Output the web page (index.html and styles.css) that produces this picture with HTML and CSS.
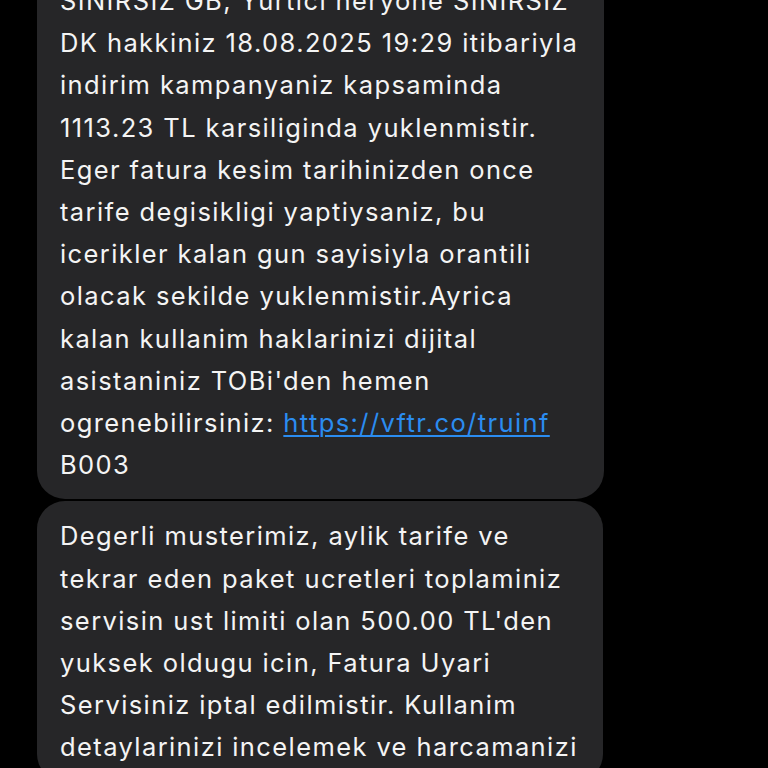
FILE: index.html
```html
<!DOCTYPE html>
<html>

<head>
    <link rel="stylesheet" href="styles.css">
</head>

<body>
    <div class="thread">
        <div class="bubble bubble-first">
            SINIRSIZ GB, Yurtici heryone SINIRSIZ<br>
            DK hakkiniz 18.08.2025 19:29 itibariyla<br>
            indirim kampanyaniz kapsaminda<br>
            1113.23 TL karsiliginda yuklenmistir.<br>
            Eger fatura kesim tarihinizden once<br>
            tarife degisikligi yaptiysaniz, bu<br>
            icerikler kalan gun sayisiyla orantili<br>
            olacak sekilde yuklenmistir.Ayrica<br>
            kalan kullanim haklarinizi dijital<br>
            asistaniniz TOBi'den hemen<br>
            ogrenebilirsiniz: <a class="link" href="#">https://vftr.co/truinf</a><br>
            B003
        </div>

        <div class="bubble bubble-second">
            Degerli musterimiz, aylik tarife ve<br>
            tekrar eden paket ucretleri toplaminiz<br>
            servisin ust limiti olan 500.00 TL'den<br>
            yuksek oldugu icin, Fatura Uyari<br>
            Servisiniz iptal edilmistir. Kullanim<br>
            detaylarinizi incelemek ve harcamanizi
        </div>
    </div>
</body>

</html>
```

FILE: styles.css
```css
html, body {
    margin: 0;
    padding: 0;
    background-color: #000;
    overflow: hidden;
}

.thread {
    display: flex;
    flex-direction: column;
    gap: 2px;
    margin-top: -34px;
    padding-left: 37px;
}

.bubble {
    box-sizing: border-box;
    background-color: #262628;
    color: #f4f4f4;
    font-family: Inter, "Noto Sans", sans-serif;
    font-size: 25.5px;
    letter-spacing: 1.4px;
    line-height: 42.2px;
    white-space: nowrap;
    padding: 14px 10px 13px 23px;
    border-radius: 28px;
}

.bubble-first {
    width: 567px;
}

.bubble-second {
    width: 566px;
}

.link {
    color: #2b8cf0;
    text-decoration: underline;
    text-decoration-thickness: 1.5px;
    text-underline-offset: 3px;
}
```
